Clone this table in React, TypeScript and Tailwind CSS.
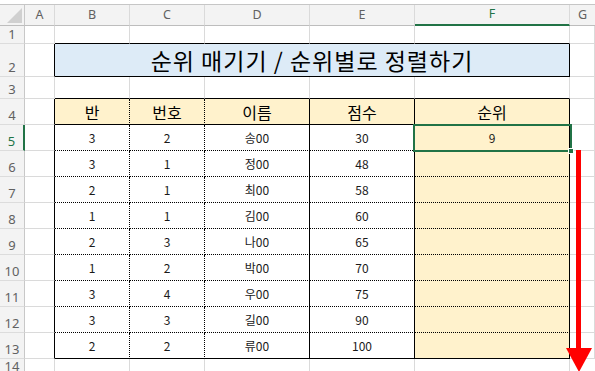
import React from "react";

const FONT = { fontFamily: '"Noto Sans CJK KR", "Noto Sans", sans-serif' };
const HFONT = { fontFamily: '"Noto Sans", "Open Sans", sans-serif' };

const rows: { b: number; c: number; d: string; e: number; f: string }[] = [
  { b: 3, c: 2, d: "송00", e: 30, f: "9" },
  { b: 3, c: 1, d: "정00", e: 48, f: "" },
  { b: 2, c: 1, d: "최00", e: 58, f: "" },
  { b: 1, c: 1, d: "김00", e: 60, f: "" },
  { b: 2, c: 3, d: "나00", e: 65, f: "" },
  { b: 1, c: 2, d: "박00", e: 70, f: "" },
  { b: 3, c: 4, d: "우00", e: 75, f: "" },
  { b: 3, c: 3, d: "길00", e: 90, f: "" },
  { b: 2, c: 2, d: "류00", e: 100, f: "" },
];

function RowHead({ n, active }: { n: number; active?: boolean }) {
  return (
    <div
      className={
        "flex items-end justify-center pb-[2px] bg-[#f3f3f3] border-b border-b-[#dcdcdc] text-[13px] leading-none " +
        (active
          ? "border-r-2 border-r-[#217346] text-[#217346]"
          : "border-r border-r-[#c8c8c8] text-[#616161]")
      }
      style={HFONT}
    >
      {n}
    </div>
  );
}

const gridCell = "border-r border-b border-r-[#dadada] border-b-[#dadada]";

export default function App() {
  return (
    <div className="relative w-[595px] h-[371px] overflow-hidden bg-white" style={FONT}>
      <div className="grid grid-cols-[25px_30px_75px_75px_105px_105px_155px_25px] grid-rows-[5px_21px_18px_33px_22px_26px_repeat(9,26px)_12px]">
        {/* top strip */}
        <div className="col-span-8 bg-white border-b border-b-[#c6c6c6]" />

        {/* column headers */}
        <div className="relative bg-[#f3f3f3] border-r border-b border-r-[#c8c8c8] border-b-[#bdbdbd]">
          <svg className="absolute right-[2px] bottom-[2px]" width="15" height="15" viewBox="0 0 15 15">
            <polygon points="15,0 15,15 0,15" fill="#d0d0d0" />
          </svg>
        </div>
        {["A", "B", "C", "D", "E"].map((l) => (
          <div
            key={l}
            className="flex items-center justify-center bg-[#f3f3f3] border-r border-b border-r-[#dadada] border-b-[#bdbdbd] text-[12.5px] text-[#616161]"
            style={HFONT}
          >
            {l}
          </div>
        ))}
        <div
          className="flex items-center justify-center bg-[#f3f3f3] border-r border-b-2 border-r-[#dadada] border-b-[#217346] text-[12.5px] text-[#217346]"
          style={HFONT}
        >
          F
        </div>
        <div
          className="flex items-center justify-center bg-[#f3f3f3] border-b border-b-[#bdbdbd] text-[12.5px] text-[#616161]"
          style={HFONT}
        >
          G
        </div>

        {/* row 1 */}
        <RowHead n={1} />
        <div className={gridCell} />
        {[0, 1, 2, 3, 4].map((i) => (
          <div key={i} className="border-r border-r-[#dadada] border-b border-b-black" />
        ))}
        <div className={gridCell} />

        {/* row 2 */}
        <RowHead n={2} />
        <div className="border-b border-b-[#dadada] border-r border-r-black" />
        <div className="col-span-5 flex items-center justify-center bg-[#ddebf7] border-r border-b border-black text-[23px] text-black tracking-[1px]">
          순위 매기기 / 순위별로 정렬하기
        </div>
        <div className={gridCell} />

        {/* row 3 */}
        <RowHead n={3} />
        <div className={gridCell} />
        {[0, 1, 2, 3, 4].map((i) => (
          <div key={i} className="border-r border-r-[#dadada] border-b border-b-black" />
        ))}
        <div className={gridCell} />

        {/* row 4 header */}
        <RowHead n={4} />
        <div className="border-b border-b-[#dadada] border-r border-r-black" />
        {["반", "번호", "이름", "점수", "순위"].map((t, i) => (
          <div
            key={t}
            className={
              "flex items-center justify-center bg-[#fff2cc] border-r border-b border-b-black border-r-black text-[16px] text-black " +
              (i < 2 ? "[border-right-style:dotted]" : "")
            }
          >
            {t}
          </div>
        ))}
        <div className={gridCell} />

        {/* data rows */}
        {rows.map((r, idx) => {
          const last = idx === rows.length - 1;
          const bottom = "border-b border-b-black " + (last ? "" : "[border-bottom-style:dotted]");
          const base = "flex items-center justify-center text-[12px] text-[#1a1a1a] border-r border-r-black " + bottom;
          return (
            <React.Fragment key={idx}>
              <RowHead n={idx + 5} active={idx === 0} />
              <div className="border-b border-b-[#dadada] border-r border-r-black" />
              <div className={base + " [border-right-style:dotted]"}>{r.b}</div>
              <div className={base + " [border-right-style:dotted]"}>{r.c}</div>
              <div className={base}>{r.d}</div>
              <div className={base}>{r.e}</div>
              <div className={base + " bg-[#fff2cc]"}>{r.f}</div>
              <div className={gridCell} />
            </React.Fragment>
          );
        })}

        {/* row 14 */}
        <div
          className="flex items-start justify-center pt-[1px] bg-[#f3f3f3] border-r border-r-[#c8c8c8] text-[13px] leading-none text-[#616161] overflow-hidden"
          style={HFONT}
        >
          <span>14</span>
        </div>
        <div className="border-r border-r-[#dadada]" />
        <div className="border-r border-r-[#dadada]" />
        <div className="border-r border-r-[#dadada]" />
        <div className="border-r border-r-[#dadada]" />
        <div className="border-r border-r-[#dadada]" />
        <div className="border-r border-r-[#dadada]" />
        <div />
      </div>

      {/* selection F5 */}
      <div className="pointer-events-none absolute left-[413px] top-[124px] w-[159px] h-[28px] border-2 border-[#217346]" />
      <div className="absolute left-[568px] top-[148px] w-[6px] h-[6px] bg-[#217346] border border-white" />

      {/* red arrow */}
      <div className="absolute left-[576px] top-[150px] w-[5px] h-[200px] bg-[#ff0000]" />
      <svg className="absolute left-[566px] top-[348px]" width="26" height="24" viewBox="0 0 26 24">
        <polygon points="0,0 26,0 13,24" fill="#ff0000" />
      </svg>
    </div>
  );
}
